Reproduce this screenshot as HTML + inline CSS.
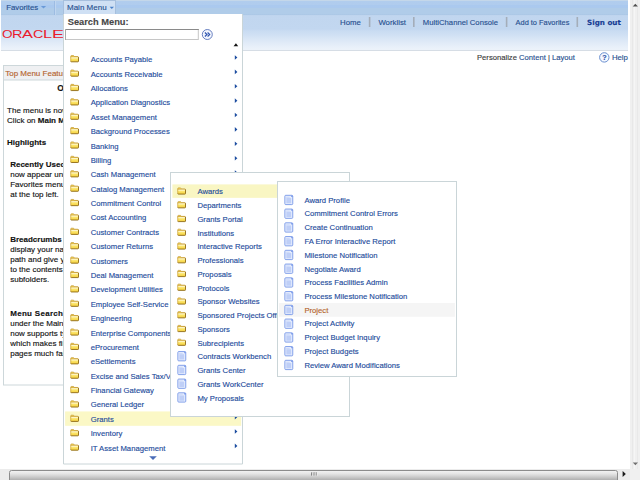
<!DOCTYPE html>
<html><head><meta charset="utf-8"><title>Main Menu</title>
<style>
html,body{margin:0;padding:0;}
body{width:640px;height:480px;overflow:hidden;position:relative;background:#fff;font-family:"Liberation Sans",Arial,sans-serif;font-size:8px;color:#111;-webkit-text-stroke:0.13px;}
.abs{position:absolute;}
.t{position:absolute;white-space:nowrap;}
.menu{position:absolute;background:#fff;}
.menu svg{position:absolute;left:0;top:0;}
.menu .t{color:#1d4b9b;}
</style></head><body>
<svg width="0" height="0" style="position:absolute"><defs><linearGradient id="fg" x1="0" y1="0" x2="0" y2="1"><stop offset="0" stop-color="#fff3a0"/><stop offset="0.5" stop-color="#fbe264"/><stop offset="1" stop-color="#f4cf3a"/></linearGradient></defs></svg>

<div class="abs" style="left:1px;top:0;width:627px;height:15px;background:linear-gradient(#c4d7ea 0,#c4d7ea 1px,#b1cdee 1.3px,#b0ccee 5px,#aac9ef 5.5px,#abc9ee 8px,#b0cce9 8.5px,#b0cce9 14.3px,#abc7e5 14.6px,#abc7e5 15px);"></div>
<div class="abs" style="left:1px;top:15px;width:627px;height:35px;background:linear-gradient(#b4cdea 0,#c1d6ef 0.6px,#c2d7f0 14px,#c9dcf2 16px,#d0e0f4 20px,#d9e6f6 24px,#e1ebf8 28px,#eaf1fa 33px,#ecf2fa 35px);"></div>
<div class="abs" style="left:1px;top:50px;width:627px;height:1px;background:#d6dde5;"></div>
<svg class="abs" style="left:0;top:0" width="640" height="480">
<path d="M40.9 5.9 h5.2 l-2.6 2.6 Z" fill="#6a9ad8"/>
<rect x="54" y="1" width="0.8" height="14" fill="#94b4de"/><rect x="54.9" y="1" width="1" height="14" fill="#c3d8f1"/>
<rect x="63.5" y="0.5" width="52" height="15" fill="#cfe0f4" stroke="#a6bfdd" stroke-width="1"/>
<path d="M109.6 6.8 h4.4 l-2.2 2.2 Z" fill="#4a80c8"/>
<rect x="368.8" y="17" width="1.6" height="10" fill="#a4adb9"/>
<rect x="413.0" y="17" width="1.6" height="10" fill="#a4adb9"/>
<rect x="505.8" y="17" width="1.6" height="10" fill="#a4adb9"/>
<rect x="576.5" y="17" width="1.6" height="10" fill="#a4adb9"/>
<circle cx="604.3" cy="57.4" r="4.7" fill="#f4f8ff" stroke="#6a8fd0" stroke-width="1"/>
<rect x="3.5" y="65.5" width="236" height="319.5" fill="#fff" stroke="#cdd7da" stroke-width="1"/>
<rect x="3.5" y="65.5" width="236" height="14.5" fill="#eff0f2" stroke="#cdd7da" stroke-width="1"/>
<rect x="630" y="0" width="10" height="469" fill="#f0f0f0"/>
<rect x="632" y="0" width="1" height="469" fill="#e8e8e8"/><rect x="634" y="0" width="1" height="469" fill="#f6f6f6"/><rect x="637" y="0" width="1" height="469" fill="#e9e9e9"/>
<rect x="0" y="469" width="640" height="11" fill="#ececec"/>
<rect x="630" y="469" width="10" height="11" fill="#f0f0f0"/>
<defs><linearGradient id="sb" x1="0" y1="0" x2="0" y2="1"><stop offset="0" stop-color="#f4f4f4"/><stop offset="0.25" stop-color="#e6e6e6"/><stop offset="0.45" stop-color="#d4d4d4"/><stop offset="0.75" stop-color="#b4b4b4"/></linearGradient></defs>
<rect x="9.5" y="470.5" width="608" height="12" rx="2" fill="url(#sb)" stroke="#8c8c8c" stroke-width="1"/>
<path d="M311.8 472.3 v3.3 M314.1 472.3 v3.3 M316.2 472.3 v3.3" stroke="#555" stroke-width="0.9"/><path d="M312.7 472.5 v3.6 M315 472.5 v3.6 M317.1 472.5 v3.6" stroke="#f4f4f4" stroke-width="0.7"/>
<path d="M632.7 6.6 l2.6 -2.8 l2.6 2.8 Z" fill="#505050"/>
<path d="M632.8 462.4 h5.2 l-2.6 2.8 Z" fill="#707070"/>
<path d="M622.6 471 l3.2 3 l-3.2 3 Z" fill="#1a1a1a"/>
</svg>
<div class="t" style="left:6.2px;top:3px;font-size:7.8px;line-height:9px;color:#27508f;">Favorites</div>
<div class="t" style="left:67px;top:3px;font-size:8px;line-height:9px;color:#27508f;">Main Menu</div>
<div class="t" title="ORACLE" style="left:0;top:27.5px;width:70px;height:12px;font-size:10.8px;line-height:12px;color:#ea1b2d;-webkit-text-stroke:0;"><span style="position:absolute;left:1.77px;top:0;transform:scaleX(1.257);transform-origin:0 0;">O</span><span style="position:absolute;left:11.69px;top:0;transform:scaleX(1.344);transform-origin:0 0;">R</span><span style="position:absolute;left:22.05px;top:0;transform:scaleX(1.515);transform-origin:0 0;">A</span><span style="position:absolute;left:33.01px;top:0;transform:scaleX(1.324);transform-origin:0 0;">C</span><span style="position:absolute;left:43.34px;top:0;transform:scaleX(1.511);transform-origin:0 0;">L</span><span style="position:absolute;left:51.91px;top:0;transform:scaleX(1.655);transform-origin:0 0;">E</span></div>
<div class="t" style="left:340.1px;top:18px;font-size:7.8px;line-height:9px;color:#27508f;">Home</div>
<div class="t" style="left:378.4px;top:18px;font-size:7.8px;line-height:9px;color:#27508f;">Worklist</div>
<div class="t" style="left:422.8px;top:18px;font-size:7.7px;line-height:9px;color:#27508f;">MultiChannel Console</div>
<div class="t" style="left:515.6px;top:18px;font-size:7.4px;line-height:9px;color:#27508f;">Add to Favorites</div>
<div class="t" style="left:587px;top:18px;font-size:7.2px;line-height:9px;color:#173d94;font-weight:bold;font-family:'DejaVu Sans','Liberation Sans',sans-serif;">Sign out</div>
<div class="t" style="left:477px;top:53px;font-size:7.65px;line-height:9px;color:#3a3a3a;">Personalize <span style="color:#27508f">Content</span> | <span style="color:#27508f">Layout</span></div>
<div class="t" style="left:602.2px;top:53px;font-size:7.2px;line-height:9px;color:#2f55a8;font-weight:bold;">?</div>
<div class="t" style="left:611.9px;top:53px;font-size:7.8px;line-height:9px;color:#27508f;">Help</div>
<div class="t" style="left:5.2px;top:69px;font-size:8px;line-height:9px;color:#b4632c;">Top Menu Features Description</div>
<div class="t" style="left:57.3px;top:83px;font-size:8.4px;line-height:10px;font-weight:bold;">Our menu has changed!</div>
<div class="t" style="left:7.1px;top:106px;font-size:8px;line-height:9px;">The menu is now located across the top of the page.</div>
<div class="t" style="left:7.1px;top:116px;font-size:8px;line-height:9px;">Click on <b>Main Menu</b> to get started.</div>
<div class="t" style="left:7.1px;top:138px;font-size:8px;line-height:9px;"><b>Highlights</b></div>
<div class="t" style="left:10.2px;top:160px;font-size:8px;line-height:9px;"><b>Recently Used</b> pages</div>
<div class="t" style="left:10.2px;top:170px;font-size:8px;line-height:9px;">now appear under the</div>
<div class="t" style="left:10.2px;top:180px;font-size:8px;line-height:9px;">Favorites menu, located</div>
<div class="t" style="left:10.2px;top:190px;font-size:8px;line-height:9px;">at the top left.</div>
<div class="t" style="left:10.2px;top:235px;font-size:8px;line-height:9px;"><b>Breadcrumbs</b> visually</div>
<div class="t" style="left:10.2px;top:245px;font-size:8px;line-height:9px;">display your navigation</div>
<div class="t" style="left:10.2px;top:255px;font-size:8px;line-height:9px;">path and give you access</div>
<div class="t" style="left:10.2px;top:265px;font-size:8px;line-height:9px;">to the contents of</div>
<div class="t" style="left:10.2px;top:275px;font-size:8px;line-height:9px;">subfolders.</div>
<div class="t" style="left:10.2px;top:309px;font-size:8px;line-height:9px;"><b style="letter-spacing:0.3px">Menu Search</b>, located</div>
<div class="t" style="left:10.2px;top:319px;font-size:8px;line-height:9px;">under the Main Menu,</div>
<div class="t" style="left:10.2px;top:329px;font-size:8px;line-height:9px;">now supports type ahead</div>
<div class="t" style="left:10.2px;top:339px;font-size:8px;line-height:9px;">which makes finding</div>
<div class="t" style="left:10.2px;top:349px;font-size:8px;line-height:9px;">pages much faster.</div>
<div class="menu" style="left:63px;top:14px;width:180px;height:451px;">
<svg width="180" height="451">
<path d="M0.5 0 V450 H179.5 V0" fill="none" stroke="#cad5d8" stroke-width="1"/>
<rect x="2.5" y="15.5" width="132.8" height="10" fill="#fff" stroke="#c6c6c6" stroke-width="1"/><path d="M2 15.5 H135.8" stroke="#8a8a8a" stroke-width="1"/><path d="M2.5 15 V26" stroke="#a8a8a8" stroke-width="1"/>
<circle cx="144.3" cy="20.5" r="5" fill="#f3f6fd" stroke="#5873ba" stroke-width="0.9"/><path d="M141.9 18.5 L144 20.5 L141.9 22.5 M144.6 18.5 L146.7 20.5 L144.6 22.5" fill="none" stroke="#2f55b0" stroke-width="1.15"/>
<path d="M170.6 32.2 l2.3 -3 l2.3 3 Z" fill="#111"/>
<g transform="translate(7.30 41.20)"><path d="M0.5 2 V1 Q0.5 0.4 1.1 0.4 H3.3 L4.2 1.4 H7.6 V2 Z" fill="#f6d95a" stroke="#c29630" stroke-width="0.7"/><path d="M0.45 1.9 H8.2 V6.0 Q8.2 6.6 7.6 6.6 H1.05 Q0.45 6.6 0.45 6.0 Z" fill="url(#fg)"/><path d="M0.45 6.1 V1.9 H8.2" fill="none" stroke="#cfa53a" stroke-width="0.8"/><path d="M8.2 1.9 V6.0 Q8.2 6.6 7.6 6.6 H1.05 Q0.45 6.6 0.45 6.0" fill="none" stroke="#94701c" stroke-width="0.95"/><path d="M1 2.6 H7.6" stroke="#fffce2" stroke-width="0.8"/></g>
<path d="M171.80 41.20 l2.6 2.3 l-2.6 2.3 Z" fill="#1c4da0"/>
<g transform="translate(7.30 55.59)"><path d="M0.5 2 V1 Q0.5 0.4 1.1 0.4 H3.3 L4.2 1.4 H7.6 V2 Z" fill="#f6d95a" stroke="#c29630" stroke-width="0.7"/><path d="M0.45 1.9 H8.2 V6.0 Q8.2 6.6 7.6 6.6 H1.05 Q0.45 6.6 0.45 6.0 Z" fill="url(#fg)"/><path d="M0.45 6.1 V1.9 H8.2" fill="none" stroke="#cfa53a" stroke-width="0.8"/><path d="M8.2 1.9 V6.0 Q8.2 6.6 7.6 6.6 H1.05 Q0.45 6.6 0.45 6.0" fill="none" stroke="#94701c" stroke-width="0.95"/><path d="M1 2.6 H7.6" stroke="#fffce2" stroke-width="0.8"/></g>
<path d="M171.80 55.59 l2.6 2.3 l-2.6 2.3 Z" fill="#1c4da0"/>
<g transform="translate(7.30 69.97)"><path d="M0.5 2 V1 Q0.5 0.4 1.1 0.4 H3.3 L4.2 1.4 H7.6 V2 Z" fill="#f6d95a" stroke="#c29630" stroke-width="0.7"/><path d="M0.45 1.9 H8.2 V6.0 Q8.2 6.6 7.6 6.6 H1.05 Q0.45 6.6 0.45 6.0 Z" fill="url(#fg)"/><path d="M0.45 6.1 V1.9 H8.2" fill="none" stroke="#cfa53a" stroke-width="0.8"/><path d="M8.2 1.9 V6.0 Q8.2 6.6 7.6 6.6 H1.05 Q0.45 6.6 0.45 6.0" fill="none" stroke="#94701c" stroke-width="0.95"/><path d="M1 2.6 H7.6" stroke="#fffce2" stroke-width="0.8"/></g>
<path d="M171.80 69.97 l2.6 2.3 l-2.6 2.3 Z" fill="#1c4da0"/>
<g transform="translate(7.30 84.36)"><path d="M0.5 2 V1 Q0.5 0.4 1.1 0.4 H3.3 L4.2 1.4 H7.6 V2 Z" fill="#f6d95a" stroke="#c29630" stroke-width="0.7"/><path d="M0.45 1.9 H8.2 V6.0 Q8.2 6.6 7.6 6.6 H1.05 Q0.45 6.6 0.45 6.0 Z" fill="url(#fg)"/><path d="M0.45 6.1 V1.9 H8.2" fill="none" stroke="#cfa53a" stroke-width="0.8"/><path d="M8.2 1.9 V6.0 Q8.2 6.6 7.6 6.6 H1.05 Q0.45 6.6 0.45 6.0" fill="none" stroke="#94701c" stroke-width="0.95"/><path d="M1 2.6 H7.6" stroke="#fffce2" stroke-width="0.8"/></g>
<path d="M171.80 84.36 l2.6 2.3 l-2.6 2.3 Z" fill="#1c4da0"/>
<g transform="translate(7.30 98.74)"><path d="M0.5 2 V1 Q0.5 0.4 1.1 0.4 H3.3 L4.2 1.4 H7.6 V2 Z" fill="#f6d95a" stroke="#c29630" stroke-width="0.7"/><path d="M0.45 1.9 H8.2 V6.0 Q8.2 6.6 7.6 6.6 H1.05 Q0.45 6.6 0.45 6.0 Z" fill="url(#fg)"/><path d="M0.45 6.1 V1.9 H8.2" fill="none" stroke="#cfa53a" stroke-width="0.8"/><path d="M8.2 1.9 V6.0 Q8.2 6.6 7.6 6.6 H1.05 Q0.45 6.6 0.45 6.0" fill="none" stroke="#94701c" stroke-width="0.95"/><path d="M1 2.6 H7.6" stroke="#fffce2" stroke-width="0.8"/></g>
<path d="M171.80 98.74 l2.6 2.3 l-2.6 2.3 Z" fill="#1c4da0"/>
<g transform="translate(7.30 113.12)"><path d="M0.5 2 V1 Q0.5 0.4 1.1 0.4 H3.3 L4.2 1.4 H7.6 V2 Z" fill="#f6d95a" stroke="#c29630" stroke-width="0.7"/><path d="M0.45 1.9 H8.2 V6.0 Q8.2 6.6 7.6 6.6 H1.05 Q0.45 6.6 0.45 6.0 Z" fill="url(#fg)"/><path d="M0.45 6.1 V1.9 H8.2" fill="none" stroke="#cfa53a" stroke-width="0.8"/><path d="M8.2 1.9 V6.0 Q8.2 6.6 7.6 6.6 H1.05 Q0.45 6.6 0.45 6.0" fill="none" stroke="#94701c" stroke-width="0.95"/><path d="M1 2.6 H7.6" stroke="#fffce2" stroke-width="0.8"/></g>
<path d="M171.80 113.12 l2.6 2.3 l-2.6 2.3 Z" fill="#1c4da0"/>
<g transform="translate(7.30 127.51)"><path d="M0.5 2 V1 Q0.5 0.4 1.1 0.4 H3.3 L4.2 1.4 H7.6 V2 Z" fill="#f6d95a" stroke="#c29630" stroke-width="0.7"/><path d="M0.45 1.9 H8.2 V6.0 Q8.2 6.6 7.6 6.6 H1.05 Q0.45 6.6 0.45 6.0 Z" fill="url(#fg)"/><path d="M0.45 6.1 V1.9 H8.2" fill="none" stroke="#cfa53a" stroke-width="0.8"/><path d="M8.2 1.9 V6.0 Q8.2 6.6 7.6 6.6 H1.05 Q0.45 6.6 0.45 6.0" fill="none" stroke="#94701c" stroke-width="0.95"/><path d="M1 2.6 H7.6" stroke="#fffce2" stroke-width="0.8"/></g>
<path d="M171.80 127.51 l2.6 2.3 l-2.6 2.3 Z" fill="#1c4da0"/>
<g transform="translate(7.30 141.89)"><path d="M0.5 2 V1 Q0.5 0.4 1.1 0.4 H3.3 L4.2 1.4 H7.6 V2 Z" fill="#f6d95a" stroke="#c29630" stroke-width="0.7"/><path d="M0.45 1.9 H8.2 V6.0 Q8.2 6.6 7.6 6.6 H1.05 Q0.45 6.6 0.45 6.0 Z" fill="url(#fg)"/><path d="M0.45 6.1 V1.9 H8.2" fill="none" stroke="#cfa53a" stroke-width="0.8"/><path d="M8.2 1.9 V6.0 Q8.2 6.6 7.6 6.6 H1.05 Q0.45 6.6 0.45 6.0" fill="none" stroke="#94701c" stroke-width="0.95"/><path d="M1 2.6 H7.6" stroke="#fffce2" stroke-width="0.8"/></g>
<path d="M171.80 141.89 l2.6 2.3 l-2.6 2.3 Z" fill="#1c4da0"/>
<g transform="translate(7.30 156.28)"><path d="M0.5 2 V1 Q0.5 0.4 1.1 0.4 H3.3 L4.2 1.4 H7.6 V2 Z" fill="#f6d95a" stroke="#c29630" stroke-width="0.7"/><path d="M0.45 1.9 H8.2 V6.0 Q8.2 6.6 7.6 6.6 H1.05 Q0.45 6.6 0.45 6.0 Z" fill="url(#fg)"/><path d="M0.45 6.1 V1.9 H8.2" fill="none" stroke="#cfa53a" stroke-width="0.8"/><path d="M8.2 1.9 V6.0 Q8.2 6.6 7.6 6.6 H1.05 Q0.45 6.6 0.45 6.0" fill="none" stroke="#94701c" stroke-width="0.95"/><path d="M1 2.6 H7.6" stroke="#fffce2" stroke-width="0.8"/></g>
<path d="M171.80 156.28 l2.6 2.3 l-2.6 2.3 Z" fill="#1c4da0"/>
<g transform="translate(7.30 170.67)"><path d="M0.5 2 V1 Q0.5 0.4 1.1 0.4 H3.3 L4.2 1.4 H7.6 V2 Z" fill="#f6d95a" stroke="#c29630" stroke-width="0.7"/><path d="M0.45 1.9 H8.2 V6.0 Q8.2 6.6 7.6 6.6 H1.05 Q0.45 6.6 0.45 6.0 Z" fill="url(#fg)"/><path d="M0.45 6.1 V1.9 H8.2" fill="none" stroke="#cfa53a" stroke-width="0.8"/><path d="M8.2 1.9 V6.0 Q8.2 6.6 7.6 6.6 H1.05 Q0.45 6.6 0.45 6.0" fill="none" stroke="#94701c" stroke-width="0.95"/><path d="M1 2.6 H7.6" stroke="#fffce2" stroke-width="0.8"/></g>
<path d="M171.80 170.67 l2.6 2.3 l-2.6 2.3 Z" fill="#1c4da0"/>
<g transform="translate(7.30 185.05)"><path d="M0.5 2 V1 Q0.5 0.4 1.1 0.4 H3.3 L4.2 1.4 H7.6 V2 Z" fill="#f6d95a" stroke="#c29630" stroke-width="0.7"/><path d="M0.45 1.9 H8.2 V6.0 Q8.2 6.6 7.6 6.6 H1.05 Q0.45 6.6 0.45 6.0 Z" fill="url(#fg)"/><path d="M0.45 6.1 V1.9 H8.2" fill="none" stroke="#cfa53a" stroke-width="0.8"/><path d="M8.2 1.9 V6.0 Q8.2 6.6 7.6 6.6 H1.05 Q0.45 6.6 0.45 6.0" fill="none" stroke="#94701c" stroke-width="0.95"/><path d="M1 2.6 H7.6" stroke="#fffce2" stroke-width="0.8"/></g>
<path d="M171.80 185.05 l2.6 2.3 l-2.6 2.3 Z" fill="#1c4da0"/>
<g transform="translate(7.30 199.44)"><path d="M0.5 2 V1 Q0.5 0.4 1.1 0.4 H3.3 L4.2 1.4 H7.6 V2 Z" fill="#f6d95a" stroke="#c29630" stroke-width="0.7"/><path d="M0.45 1.9 H8.2 V6.0 Q8.2 6.6 7.6 6.6 H1.05 Q0.45 6.6 0.45 6.0 Z" fill="url(#fg)"/><path d="M0.45 6.1 V1.9 H8.2" fill="none" stroke="#cfa53a" stroke-width="0.8"/><path d="M8.2 1.9 V6.0 Q8.2 6.6 7.6 6.6 H1.05 Q0.45 6.6 0.45 6.0" fill="none" stroke="#94701c" stroke-width="0.95"/><path d="M1 2.6 H7.6" stroke="#fffce2" stroke-width="0.8"/></g>
<path d="M171.80 199.44 l2.6 2.3 l-2.6 2.3 Z" fill="#1c4da0"/>
<g transform="translate(7.30 213.82)"><path d="M0.5 2 V1 Q0.5 0.4 1.1 0.4 H3.3 L4.2 1.4 H7.6 V2 Z" fill="#f6d95a" stroke="#c29630" stroke-width="0.7"/><path d="M0.45 1.9 H8.2 V6.0 Q8.2 6.6 7.6 6.6 H1.05 Q0.45 6.6 0.45 6.0 Z" fill="url(#fg)"/><path d="M0.45 6.1 V1.9 H8.2" fill="none" stroke="#cfa53a" stroke-width="0.8"/><path d="M8.2 1.9 V6.0 Q8.2 6.6 7.6 6.6 H1.05 Q0.45 6.6 0.45 6.0" fill="none" stroke="#94701c" stroke-width="0.95"/><path d="M1 2.6 H7.6" stroke="#fffce2" stroke-width="0.8"/></g>
<path d="M171.80 213.82 l2.6 2.3 l-2.6 2.3 Z" fill="#1c4da0"/>
<g transform="translate(7.30 228.20)"><path d="M0.5 2 V1 Q0.5 0.4 1.1 0.4 H3.3 L4.2 1.4 H7.6 V2 Z" fill="#f6d95a" stroke="#c29630" stroke-width="0.7"/><path d="M0.45 1.9 H8.2 V6.0 Q8.2 6.6 7.6 6.6 H1.05 Q0.45 6.6 0.45 6.0 Z" fill="url(#fg)"/><path d="M0.45 6.1 V1.9 H8.2" fill="none" stroke="#cfa53a" stroke-width="0.8"/><path d="M8.2 1.9 V6.0 Q8.2 6.6 7.6 6.6 H1.05 Q0.45 6.6 0.45 6.0" fill="none" stroke="#94701c" stroke-width="0.95"/><path d="M1 2.6 H7.6" stroke="#fffce2" stroke-width="0.8"/></g>
<path d="M171.80 228.20 l2.6 2.3 l-2.6 2.3 Z" fill="#1c4da0"/>
<g transform="translate(7.30 242.59)"><path d="M0.5 2 V1 Q0.5 0.4 1.1 0.4 H3.3 L4.2 1.4 H7.6 V2 Z" fill="#f6d95a" stroke="#c29630" stroke-width="0.7"/><path d="M0.45 1.9 H8.2 V6.0 Q8.2 6.6 7.6 6.6 H1.05 Q0.45 6.6 0.45 6.0 Z" fill="url(#fg)"/><path d="M0.45 6.1 V1.9 H8.2" fill="none" stroke="#cfa53a" stroke-width="0.8"/><path d="M8.2 1.9 V6.0 Q8.2 6.6 7.6 6.6 H1.05 Q0.45 6.6 0.45 6.0" fill="none" stroke="#94701c" stroke-width="0.95"/><path d="M1 2.6 H7.6" stroke="#fffce2" stroke-width="0.8"/></g>
<path d="M171.80 242.59 l2.6 2.3 l-2.6 2.3 Z" fill="#1c4da0"/>
<g transform="translate(7.30 256.98)"><path d="M0.5 2 V1 Q0.5 0.4 1.1 0.4 H3.3 L4.2 1.4 H7.6 V2 Z" fill="#f6d95a" stroke="#c29630" stroke-width="0.7"/><path d="M0.45 1.9 H8.2 V6.0 Q8.2 6.6 7.6 6.6 H1.05 Q0.45 6.6 0.45 6.0 Z" fill="url(#fg)"/><path d="M0.45 6.1 V1.9 H8.2" fill="none" stroke="#cfa53a" stroke-width="0.8"/><path d="M8.2 1.9 V6.0 Q8.2 6.6 7.6 6.6 H1.05 Q0.45 6.6 0.45 6.0" fill="none" stroke="#94701c" stroke-width="0.95"/><path d="M1 2.6 H7.6" stroke="#fffce2" stroke-width="0.8"/></g>
<path d="M171.80 256.98 l2.6 2.3 l-2.6 2.3 Z" fill="#1c4da0"/>
<g transform="translate(7.30 271.36)"><path d="M0.5 2 V1 Q0.5 0.4 1.1 0.4 H3.3 L4.2 1.4 H7.6 V2 Z" fill="#f6d95a" stroke="#c29630" stroke-width="0.7"/><path d="M0.45 1.9 H8.2 V6.0 Q8.2 6.6 7.6 6.6 H1.05 Q0.45 6.6 0.45 6.0 Z" fill="url(#fg)"/><path d="M0.45 6.1 V1.9 H8.2" fill="none" stroke="#cfa53a" stroke-width="0.8"/><path d="M8.2 1.9 V6.0 Q8.2 6.6 7.6 6.6 H1.05 Q0.45 6.6 0.45 6.0" fill="none" stroke="#94701c" stroke-width="0.95"/><path d="M1 2.6 H7.6" stroke="#fffce2" stroke-width="0.8"/></g>
<path d="M171.80 271.36 l2.6 2.3 l-2.6 2.3 Z" fill="#1c4da0"/>
<g transform="translate(7.30 285.75)"><path d="M0.5 2 V1 Q0.5 0.4 1.1 0.4 H3.3 L4.2 1.4 H7.6 V2 Z" fill="#f6d95a" stroke="#c29630" stroke-width="0.7"/><path d="M0.45 1.9 H8.2 V6.0 Q8.2 6.6 7.6 6.6 H1.05 Q0.45 6.6 0.45 6.0 Z" fill="url(#fg)"/><path d="M0.45 6.1 V1.9 H8.2" fill="none" stroke="#cfa53a" stroke-width="0.8"/><path d="M8.2 1.9 V6.0 Q8.2 6.6 7.6 6.6 H1.05 Q0.45 6.6 0.45 6.0" fill="none" stroke="#94701c" stroke-width="0.95"/><path d="M1 2.6 H7.6" stroke="#fffce2" stroke-width="0.8"/></g>
<path d="M171.80 285.75 l2.6 2.3 l-2.6 2.3 Z" fill="#1c4da0"/>
<g transform="translate(7.30 300.13)"><path d="M0.5 2 V1 Q0.5 0.4 1.1 0.4 H3.3 L4.2 1.4 H7.6 V2 Z" fill="#f6d95a" stroke="#c29630" stroke-width="0.7"/><path d="M0.45 1.9 H8.2 V6.0 Q8.2 6.6 7.6 6.6 H1.05 Q0.45 6.6 0.45 6.0 Z" fill="url(#fg)"/><path d="M0.45 6.1 V1.9 H8.2" fill="none" stroke="#cfa53a" stroke-width="0.8"/><path d="M8.2 1.9 V6.0 Q8.2 6.6 7.6 6.6 H1.05 Q0.45 6.6 0.45 6.0" fill="none" stroke="#94701c" stroke-width="0.95"/><path d="M1 2.6 H7.6" stroke="#fffce2" stroke-width="0.8"/></g>
<path d="M171.80 300.13 l2.6 2.3 l-2.6 2.3 Z" fill="#1c4da0"/>
<g transform="translate(7.30 314.51)"><path d="M0.5 2 V1 Q0.5 0.4 1.1 0.4 H3.3 L4.2 1.4 H7.6 V2 Z" fill="#f6d95a" stroke="#c29630" stroke-width="0.7"/><path d="M0.45 1.9 H8.2 V6.0 Q8.2 6.6 7.6 6.6 H1.05 Q0.45 6.6 0.45 6.0 Z" fill="url(#fg)"/><path d="M0.45 6.1 V1.9 H8.2" fill="none" stroke="#cfa53a" stroke-width="0.8"/><path d="M8.2 1.9 V6.0 Q8.2 6.6 7.6 6.6 H1.05 Q0.45 6.6 0.45 6.0" fill="none" stroke="#94701c" stroke-width="0.95"/><path d="M1 2.6 H7.6" stroke="#fffce2" stroke-width="0.8"/></g>
<path d="M171.80 314.51 l2.6 2.3 l-2.6 2.3 Z" fill="#1c4da0"/>
<g transform="translate(7.30 328.90)"><path d="M0.5 2 V1 Q0.5 0.4 1.1 0.4 H3.3 L4.2 1.4 H7.6 V2 Z" fill="#f6d95a" stroke="#c29630" stroke-width="0.7"/><path d="M0.45 1.9 H8.2 V6.0 Q8.2 6.6 7.6 6.6 H1.05 Q0.45 6.6 0.45 6.0 Z" fill="url(#fg)"/><path d="M0.45 6.1 V1.9 H8.2" fill="none" stroke="#cfa53a" stroke-width="0.8"/><path d="M8.2 1.9 V6.0 Q8.2 6.6 7.6 6.6 H1.05 Q0.45 6.6 0.45 6.0" fill="none" stroke="#94701c" stroke-width="0.95"/><path d="M1 2.6 H7.6" stroke="#fffce2" stroke-width="0.8"/></g>
<path d="M171.80 328.90 l2.6 2.3 l-2.6 2.3 Z" fill="#1c4da0"/>
<g transform="translate(7.30 343.28)"><path d="M0.5 2 V1 Q0.5 0.4 1.1 0.4 H3.3 L4.2 1.4 H7.6 V2 Z" fill="#f6d95a" stroke="#c29630" stroke-width="0.7"/><path d="M0.45 1.9 H8.2 V6.0 Q8.2 6.6 7.6 6.6 H1.05 Q0.45 6.6 0.45 6.0 Z" fill="url(#fg)"/><path d="M0.45 6.1 V1.9 H8.2" fill="none" stroke="#cfa53a" stroke-width="0.8"/><path d="M8.2 1.9 V6.0 Q8.2 6.6 7.6 6.6 H1.05 Q0.45 6.6 0.45 6.0" fill="none" stroke="#94701c" stroke-width="0.95"/><path d="M1 2.6 H7.6" stroke="#fffce2" stroke-width="0.8"/></g>
<path d="M171.80 343.28 l2.6 2.3 l-2.6 2.3 Z" fill="#1c4da0"/>
<g transform="translate(7.30 357.67)"><path d="M0.5 2 V1 Q0.5 0.4 1.1 0.4 H3.3 L4.2 1.4 H7.6 V2 Z" fill="#f6d95a" stroke="#c29630" stroke-width="0.7"/><path d="M0.45 1.9 H8.2 V6.0 Q8.2 6.6 7.6 6.6 H1.05 Q0.45 6.6 0.45 6.0 Z" fill="url(#fg)"/><path d="M0.45 6.1 V1.9 H8.2" fill="none" stroke="#cfa53a" stroke-width="0.8"/><path d="M8.2 1.9 V6.0 Q8.2 6.6 7.6 6.6 H1.05 Q0.45 6.6 0.45 6.0" fill="none" stroke="#94701c" stroke-width="0.95"/><path d="M1 2.6 H7.6" stroke="#fffce2" stroke-width="0.8"/></g>
<path d="M171.80 357.67 l2.6 2.3 l-2.6 2.3 Z" fill="#1c4da0"/>
<g transform="translate(7.30 372.06)"><path d="M0.5 2 V1 Q0.5 0.4 1.1 0.4 H3.3 L4.2 1.4 H7.6 V2 Z" fill="#f6d95a" stroke="#c29630" stroke-width="0.7"/><path d="M0.45 1.9 H8.2 V6.0 Q8.2 6.6 7.6 6.6 H1.05 Q0.45 6.6 0.45 6.0 Z" fill="url(#fg)"/><path d="M0.45 6.1 V1.9 H8.2" fill="none" stroke="#cfa53a" stroke-width="0.8"/><path d="M8.2 1.9 V6.0 Q8.2 6.6 7.6 6.6 H1.05 Q0.45 6.6 0.45 6.0" fill="none" stroke="#94701c" stroke-width="0.95"/><path d="M1 2.6 H7.6" stroke="#fffce2" stroke-width="0.8"/></g>
<path d="M171.80 372.06 l2.6 2.3 l-2.6 2.3 Z" fill="#1c4da0"/>
<g transform="translate(7.30 386.44)"><path d="M0.5 2 V1 Q0.5 0.4 1.1 0.4 H3.3 L4.2 1.4 H7.6 V2 Z" fill="#f6d95a" stroke="#c29630" stroke-width="0.7"/><path d="M0.45 1.9 H8.2 V6.0 Q8.2 6.6 7.6 6.6 H1.05 Q0.45 6.6 0.45 6.0 Z" fill="url(#fg)"/><path d="M0.45 6.1 V1.9 H8.2" fill="none" stroke="#cfa53a" stroke-width="0.8"/><path d="M8.2 1.9 V6.0 Q8.2 6.6 7.6 6.6 H1.05 Q0.45 6.6 0.45 6.0" fill="none" stroke="#94701c" stroke-width="0.95"/><path d="M1 2.6 H7.6" stroke="#fffce2" stroke-width="0.8"/></g>
<path d="M171.80 386.44 l2.6 2.3 l-2.6 2.3 Z" fill="#1c4da0"/>
<rect x="2.1" y="397.43" width="176.1" height="14.38" fill="#fbf8c6"/>
<g transform="translate(7.30 400.82)"><path d="M0.5 2 V1 Q0.5 0.4 1.1 0.4 H3.3 L4.2 1.4 H7.6 V2 Z" fill="#f6d95a" stroke="#c29630" stroke-width="0.7"/><path d="M0.45 1.9 H8.2 V6.0 Q8.2 6.6 7.6 6.6 H1.05 Q0.45 6.6 0.45 6.0 Z" fill="url(#fg)"/><path d="M0.45 6.1 V1.9 H8.2" fill="none" stroke="#cfa53a" stroke-width="0.8"/><path d="M8.2 1.9 V6.0 Q8.2 6.6 7.6 6.6 H1.05 Q0.45 6.6 0.45 6.0" fill="none" stroke="#94701c" stroke-width="0.95"/><path d="M1 2.6 H7.6" stroke="#fffce2" stroke-width="0.8"/></g>
<path d="M171.80 400.82 l2.6 2.3 l-2.6 2.3 Z" fill="#1c4da0"/>
<g transform="translate(7.30 415.21)"><path d="M0.5 2 V1 Q0.5 0.4 1.1 0.4 H3.3 L4.2 1.4 H7.6 V2 Z" fill="#f6d95a" stroke="#c29630" stroke-width="0.7"/><path d="M0.45 1.9 H8.2 V6.0 Q8.2 6.6 7.6 6.6 H1.05 Q0.45 6.6 0.45 6.0 Z" fill="url(#fg)"/><path d="M0.45 6.1 V1.9 H8.2" fill="none" stroke="#cfa53a" stroke-width="0.8"/><path d="M8.2 1.9 V6.0 Q8.2 6.6 7.6 6.6 H1.05 Q0.45 6.6 0.45 6.0" fill="none" stroke="#94701c" stroke-width="0.95"/><path d="M1 2.6 H7.6" stroke="#fffce2" stroke-width="0.8"/></g>
<path d="M171.80 415.21 l2.6 2.3 l-2.6 2.3 Z" fill="#1c4da0"/>
<g transform="translate(7.30 429.59)"><path d="M0.5 2 V1 Q0.5 0.4 1.1 0.4 H3.3 L4.2 1.4 H7.6 V2 Z" fill="#f6d95a" stroke="#c29630" stroke-width="0.7"/><path d="M0.45 1.9 H8.2 V6.0 Q8.2 6.6 7.6 6.6 H1.05 Q0.45 6.6 0.45 6.0 Z" fill="url(#fg)"/><path d="M0.45 6.1 V1.9 H8.2" fill="none" stroke="#cfa53a" stroke-width="0.8"/><path d="M8.2 1.9 V6.0 Q8.2 6.6 7.6 6.6 H1.05 Q0.45 6.6 0.45 6.0" fill="none" stroke="#94701c" stroke-width="0.95"/><path d="M1 2.6 H7.6" stroke="#fffce2" stroke-width="0.8"/></g>
<path d="M171.80 429.59 l2.6 2.3 l-2.6 2.3 Z" fill="#1c4da0"/>
<path d="M86.2 442.2 h7.6 l-3.8 3.9 Z" fill="#4a6cb8"/>
</svg>
<div class="t" style="left:4.7px;top:3px;font-size:9.3px;line-height:10px;color:#474747;font-weight:bold;">Search Menu:</div>
<div class="t" style="left:27.700000000000003px;top:41px;font-size:7.7px;line-height:9px;">Accounts Payable</div>
<div class="t" style="left:27.700000000000003px;top:56px;font-size:7.7px;line-height:9px;">Accounts Receivable</div>
<div class="t" style="left:27.700000000000003px;top:70px;font-size:7.7px;line-height:9px;">Allocations</div>
<div class="t" style="left:27.700000000000003px;top:84px;font-size:7.7px;line-height:9px;">Application Diagnostics</div>
<div class="t" style="left:27.700000000000003px;top:99px;font-size:7.7px;line-height:9px;">Asset Management</div>
<div class="t" style="left:27.700000000000003px;top:113px;font-size:7.7px;line-height:9px;">Background Processes</div>
<div class="t" style="left:27.700000000000003px;top:128px;font-size:7.7px;line-height:9px;">Banking</div>
<div class="t" style="left:27.700000000000003px;top:142px;font-size:7.7px;line-height:9px;">Billing</div>
<div class="t" style="left:27.700000000000003px;top:156px;font-size:7.7px;line-height:9px;">Cash Management</div>
<div class="t" style="left:27.700000000000003px;top:171px;font-size:7.7px;line-height:9px;">Catalog Management</div>
<div class="t" style="left:27.700000000000003px;top:185px;font-size:7.7px;line-height:9px;">Commitment Control</div>
<div class="t" style="left:27.700000000000003px;top:199px;font-size:7.7px;line-height:9px;">Cost Accounting</div>
<div class="t" style="left:27.700000000000003px;top:214px;font-size:7.7px;line-height:9px;">Customer Contracts</div>
<div class="t" style="left:27.700000000000003px;top:228px;font-size:7.7px;line-height:9px;">Customer Returns</div>
<div class="t" style="left:27.700000000000003px;top:243px;font-size:7.7px;line-height:9px;">Customers</div>
<div class="t" style="left:27.700000000000003px;top:257px;font-size:7.7px;line-height:9px;">Deal Management</div>
<div class="t" style="left:27.700000000000003px;top:271px;font-size:7.7px;line-height:9px;">Development Utilities</div>
<div class="t" style="left:27.700000000000003px;top:286px;font-size:7.7px;line-height:9px;">Employee Self-Service</div>
<div class="t" style="left:27.700000000000003px;top:300px;font-size:7.7px;line-height:9px;">Engineering</div>
<div class="t" style="left:27.700000000000003px;top:315px;font-size:7.7px;line-height:9px;">Enterprise Components</div>
<div class="t" style="left:27.700000000000003px;top:329px;font-size:7.7px;line-height:9px;">eProcurement</div>
<div class="t" style="left:27.700000000000003px;top:343px;font-size:7.7px;line-height:9px;">eSettlements</div>
<div class="t" style="left:27.700000000000003px;top:358px;font-size:7.7px;line-height:9px;">Excise and Sales Tax/VAT IND</div>
<div class="t" style="left:27.700000000000003px;top:372px;font-size:7.7px;line-height:9px;">Financial Gateway</div>
<div class="t" style="left:27.700000000000003px;top:386px;font-size:7.7px;line-height:9px;">General Ledger</div>
<div class="t" style="left:27.700000000000003px;top:401px;font-size:7.7px;line-height:9px;">Grants</div>
<div class="t" style="left:27.700000000000003px;top:415px;font-size:7.7px;line-height:9px;">Inventory</div>
<div class="t" style="left:27.700000000000003px;top:430px;font-size:7.7px;line-height:9px;">IT Asset Management</div>
</div>
<div class="menu" style="left:170px;top:172px;width:180px;height:245px;">
<svg width="180" height="245">
<rect x="0.5" y="0.5" width="179" height="244" fill="none" stroke="#cad5d8" stroke-width="1"/>
<rect x="2.4" y="12.40" width="176.2" height="13.45" fill="#f9f6c3"/>
<g transform="translate(7.30 15.50)"><path d="M0.5 2 V1 Q0.5 0.4 1.1 0.4 H3.3 L4.2 1.4 H7.6 V2 Z" fill="#f6d95a" stroke="#c29630" stroke-width="0.7"/><path d="M0.45 1.9 H8.2 V6.0 Q8.2 6.6 7.6 6.6 H1.05 Q0.45 6.6 0.45 6.0 Z" fill="url(#fg)"/><path d="M0.45 6.1 V1.9 H8.2" fill="none" stroke="#cfa53a" stroke-width="0.8"/><path d="M8.2 1.9 V6.0 Q8.2 6.6 7.6 6.6 H1.05 Q0.45 6.6 0.45 6.0" fill="none" stroke="#94701c" stroke-width="0.95"/><path d="M1 2.6 H7.6" stroke="#fffce2" stroke-width="0.8"/></g>
<g transform="translate(7.30 29.25)"><path d="M0.5 2 V1 Q0.5 0.4 1.1 0.4 H3.3 L4.2 1.4 H7.6 V2 Z" fill="#f6d95a" stroke="#c29630" stroke-width="0.7"/><path d="M0.45 1.9 H8.2 V6.0 Q8.2 6.6 7.6 6.6 H1.05 Q0.45 6.6 0.45 6.0 Z" fill="url(#fg)"/><path d="M0.45 6.1 V1.9 H8.2" fill="none" stroke="#cfa53a" stroke-width="0.8"/><path d="M8.2 1.9 V6.0 Q8.2 6.6 7.6 6.6 H1.05 Q0.45 6.6 0.45 6.0" fill="none" stroke="#94701c" stroke-width="0.95"/><path d="M1 2.6 H7.6" stroke="#fffce2" stroke-width="0.8"/></g>
<g transform="translate(7.30 43.00)"><path d="M0.5 2 V1 Q0.5 0.4 1.1 0.4 H3.3 L4.2 1.4 H7.6 V2 Z" fill="#f6d95a" stroke="#c29630" stroke-width="0.7"/><path d="M0.45 1.9 H8.2 V6.0 Q8.2 6.6 7.6 6.6 H1.05 Q0.45 6.6 0.45 6.0 Z" fill="url(#fg)"/><path d="M0.45 6.1 V1.9 H8.2" fill="none" stroke="#cfa53a" stroke-width="0.8"/><path d="M8.2 1.9 V6.0 Q8.2 6.6 7.6 6.6 H1.05 Q0.45 6.6 0.45 6.0" fill="none" stroke="#94701c" stroke-width="0.95"/><path d="M1 2.6 H7.6" stroke="#fffce2" stroke-width="0.8"/></g>
<g transform="translate(7.30 56.75)"><path d="M0.5 2 V1 Q0.5 0.4 1.1 0.4 H3.3 L4.2 1.4 H7.6 V2 Z" fill="#f6d95a" stroke="#c29630" stroke-width="0.7"/><path d="M0.45 1.9 H8.2 V6.0 Q8.2 6.6 7.6 6.6 H1.05 Q0.45 6.6 0.45 6.0 Z" fill="url(#fg)"/><path d="M0.45 6.1 V1.9 H8.2" fill="none" stroke="#cfa53a" stroke-width="0.8"/><path d="M8.2 1.9 V6.0 Q8.2 6.6 7.6 6.6 H1.05 Q0.45 6.6 0.45 6.0" fill="none" stroke="#94701c" stroke-width="0.95"/><path d="M1 2.6 H7.6" stroke="#fffce2" stroke-width="0.8"/></g>
<g transform="translate(7.30 70.50)"><path d="M0.5 2 V1 Q0.5 0.4 1.1 0.4 H3.3 L4.2 1.4 H7.6 V2 Z" fill="#f6d95a" stroke="#c29630" stroke-width="0.7"/><path d="M0.45 1.9 H8.2 V6.0 Q8.2 6.6 7.6 6.6 H1.05 Q0.45 6.6 0.45 6.0 Z" fill="url(#fg)"/><path d="M0.45 6.1 V1.9 H8.2" fill="none" stroke="#cfa53a" stroke-width="0.8"/><path d="M8.2 1.9 V6.0 Q8.2 6.6 7.6 6.6 H1.05 Q0.45 6.6 0.45 6.0" fill="none" stroke="#94701c" stroke-width="0.95"/><path d="M1 2.6 H7.6" stroke="#fffce2" stroke-width="0.8"/></g>
<g transform="translate(7.30 84.25)"><path d="M0.5 2 V1 Q0.5 0.4 1.1 0.4 H3.3 L4.2 1.4 H7.6 V2 Z" fill="#f6d95a" stroke="#c29630" stroke-width="0.7"/><path d="M0.45 1.9 H8.2 V6.0 Q8.2 6.6 7.6 6.6 H1.05 Q0.45 6.6 0.45 6.0 Z" fill="url(#fg)"/><path d="M0.45 6.1 V1.9 H8.2" fill="none" stroke="#cfa53a" stroke-width="0.8"/><path d="M8.2 1.9 V6.0 Q8.2 6.6 7.6 6.6 H1.05 Q0.45 6.6 0.45 6.0" fill="none" stroke="#94701c" stroke-width="0.95"/><path d="M1 2.6 H7.6" stroke="#fffce2" stroke-width="0.8"/></g>
<g transform="translate(7.30 98.00)"><path d="M0.5 2 V1 Q0.5 0.4 1.1 0.4 H3.3 L4.2 1.4 H7.6 V2 Z" fill="#f6d95a" stroke="#c29630" stroke-width="0.7"/><path d="M0.45 1.9 H8.2 V6.0 Q8.2 6.6 7.6 6.6 H1.05 Q0.45 6.6 0.45 6.0 Z" fill="url(#fg)"/><path d="M0.45 6.1 V1.9 H8.2" fill="none" stroke="#cfa53a" stroke-width="0.8"/><path d="M8.2 1.9 V6.0 Q8.2 6.6 7.6 6.6 H1.05 Q0.45 6.6 0.45 6.0" fill="none" stroke="#94701c" stroke-width="0.95"/><path d="M1 2.6 H7.6" stroke="#fffce2" stroke-width="0.8"/></g>
<g transform="translate(7.30 111.75)"><path d="M0.5 2 V1 Q0.5 0.4 1.1 0.4 H3.3 L4.2 1.4 H7.6 V2 Z" fill="#f6d95a" stroke="#c29630" stroke-width="0.7"/><path d="M0.45 1.9 H8.2 V6.0 Q8.2 6.6 7.6 6.6 H1.05 Q0.45 6.6 0.45 6.0 Z" fill="url(#fg)"/><path d="M0.45 6.1 V1.9 H8.2" fill="none" stroke="#cfa53a" stroke-width="0.8"/><path d="M8.2 1.9 V6.0 Q8.2 6.6 7.6 6.6 H1.05 Q0.45 6.6 0.45 6.0" fill="none" stroke="#94701c" stroke-width="0.95"/><path d="M1 2.6 H7.6" stroke="#fffce2" stroke-width="0.8"/></g>
<g transform="translate(7.30 125.50)"><path d="M0.5 2 V1 Q0.5 0.4 1.1 0.4 H3.3 L4.2 1.4 H7.6 V2 Z" fill="#f6d95a" stroke="#c29630" stroke-width="0.7"/><path d="M0.45 1.9 H8.2 V6.0 Q8.2 6.6 7.6 6.6 H1.05 Q0.45 6.6 0.45 6.0 Z" fill="url(#fg)"/><path d="M0.45 6.1 V1.9 H8.2" fill="none" stroke="#cfa53a" stroke-width="0.8"/><path d="M8.2 1.9 V6.0 Q8.2 6.6 7.6 6.6 H1.05 Q0.45 6.6 0.45 6.0" fill="none" stroke="#94701c" stroke-width="0.95"/><path d="M1 2.6 H7.6" stroke="#fffce2" stroke-width="0.8"/></g>
<g transform="translate(7.30 139.25)"><path d="M0.5 2 V1 Q0.5 0.4 1.1 0.4 H3.3 L4.2 1.4 H7.6 V2 Z" fill="#f6d95a" stroke="#c29630" stroke-width="0.7"/><path d="M0.45 1.9 H8.2 V6.0 Q8.2 6.6 7.6 6.6 H1.05 Q0.45 6.6 0.45 6.0 Z" fill="url(#fg)"/><path d="M0.45 6.1 V1.9 H8.2" fill="none" stroke="#cfa53a" stroke-width="0.8"/><path d="M8.2 1.9 V6.0 Q8.2 6.6 7.6 6.6 H1.05 Q0.45 6.6 0.45 6.0" fill="none" stroke="#94701c" stroke-width="0.95"/><path d="M1 2.6 H7.6" stroke="#fffce2" stroke-width="0.8"/></g>
<g transform="translate(7.30 153.00)"><path d="M0.5 2 V1 Q0.5 0.4 1.1 0.4 H3.3 L4.2 1.4 H7.6 V2 Z" fill="#f6d95a" stroke="#c29630" stroke-width="0.7"/><path d="M0.45 1.9 H8.2 V6.0 Q8.2 6.6 7.6 6.6 H1.05 Q0.45 6.6 0.45 6.0 Z" fill="url(#fg)"/><path d="M0.45 6.1 V1.9 H8.2" fill="none" stroke="#cfa53a" stroke-width="0.8"/><path d="M8.2 1.9 V6.0 Q8.2 6.6 7.6 6.6 H1.05 Q0.45 6.6 0.45 6.0" fill="none" stroke="#94701c" stroke-width="0.95"/><path d="M1 2.6 H7.6" stroke="#fffce2" stroke-width="0.8"/></g>
<g transform="translate(7.30 166.75)"><path d="M0.5 2 V1 Q0.5 0.4 1.1 0.4 H3.3 L4.2 1.4 H7.6 V2 Z" fill="#f6d95a" stroke="#c29630" stroke-width="0.7"/><path d="M0.45 1.9 H8.2 V6.0 Q8.2 6.6 7.6 6.6 H1.05 Q0.45 6.6 0.45 6.0 Z" fill="url(#fg)"/><path d="M0.45 6.1 V1.9 H8.2" fill="none" stroke="#cfa53a" stroke-width="0.8"/><path d="M8.2 1.9 V6.0 Q8.2 6.6 7.6 6.6 H1.05 Q0.45 6.6 0.45 6.0" fill="none" stroke="#94701c" stroke-width="0.95"/><path d="M1 2.6 H7.6" stroke="#fffce2" stroke-width="0.8"/></g>
<g transform="translate(7.40 179.10)"><rect x="0.45" y="0.45" width="7.9" height="9.3" rx="0.9" fill="#e6edfd" stroke="#7797e8" stroke-width="0.9"/><rect x="1.9" y="3.1" width="4.9" height="5.3" fill="#bfcff7"/><rect x="1.7" y="1.9" width="3.6" height="1.1" fill="#ccd9f9"/><path d="M6.9 0.6 H7.6 Q8.2 0.6 8.2 1.2 V2.1 H6.9 Z" fill="#6a8ee6"/></g>
<g transform="translate(7.40 192.85)"><rect x="0.45" y="0.45" width="7.9" height="9.3" rx="0.9" fill="#e6edfd" stroke="#7797e8" stroke-width="0.9"/><rect x="1.9" y="3.1" width="4.9" height="5.3" fill="#bfcff7"/><rect x="1.7" y="1.9" width="3.6" height="1.1" fill="#ccd9f9"/><path d="M6.9 0.6 H7.6 Q8.2 0.6 8.2 1.2 V2.1 H6.9 Z" fill="#6a8ee6"/></g>
<g transform="translate(7.40 206.60)"><rect x="0.45" y="0.45" width="7.9" height="9.3" rx="0.9" fill="#e6edfd" stroke="#7797e8" stroke-width="0.9"/><rect x="1.9" y="3.1" width="4.9" height="5.3" fill="#bfcff7"/><rect x="1.7" y="1.9" width="3.6" height="1.1" fill="#ccd9f9"/><path d="M6.9 0.6 H7.6 Q8.2 0.6 8.2 1.2 V2.1 H6.9 Z" fill="#6a8ee6"/></g>
<g transform="translate(7.40 220.35)"><rect x="0.45" y="0.45" width="7.9" height="9.3" rx="0.9" fill="#e6edfd" stroke="#7797e8" stroke-width="0.9"/><rect x="1.9" y="3.1" width="4.9" height="5.3" fill="#bfcff7"/><rect x="1.7" y="1.9" width="3.6" height="1.1" fill="#ccd9f9"/><path d="M6.9 0.6 H7.6 Q8.2 0.6 8.2 1.2 V2.1 H6.9 Z" fill="#6a8ee6"/></g>
</svg>
<div class="t" style="left:27.400000000000006px;top:15px;font-size:7.7px;line-height:9px;">Awards</div>
<div class="t" style="left:27.400000000000006px;top:29px;font-size:7.7px;line-height:9px;">Departments</div>
<div class="t" style="left:27.400000000000006px;top:43px;font-size:7.7px;line-height:9px;">Grants Portal</div>
<div class="t" style="left:27.400000000000006px;top:57px;font-size:7.7px;line-height:9px;">Institutions</div>
<div class="t" style="left:27.400000000000006px;top:70px;font-size:7.7px;line-height:9px;">Interactive Reports</div>
<div class="t" style="left:27.400000000000006px;top:84px;font-size:7.7px;line-height:9px;">Professionals</div>
<div class="t" style="left:27.400000000000006px;top:98px;font-size:7.7px;line-height:9px;">Proposals</div>
<div class="t" style="left:27.400000000000006px;top:112px;font-size:7.7px;line-height:9px;">Protocols</div>
<div class="t" style="left:27.400000000000006px;top:125px;font-size:7.7px;line-height:9px;">Sponsor Websites</div>
<div class="t" style="left:27.400000000000006px;top:139px;font-size:7.7px;line-height:9px;">Sponsored Projects Office</div>
<div class="t" style="left:27.400000000000006px;top:153px;font-size:7.7px;line-height:9px;">Sponsors</div>
<div class="t" style="left:27.400000000000006px;top:167px;font-size:7.7px;line-height:9px;">Subrecipients</div>
<div class="t" style="left:27.400000000000006px;top:180px;font-size:7.7px;line-height:9px;">Contracts Workbench</div>
<div class="t" style="left:27.400000000000006px;top:194px;font-size:7.7px;line-height:9px;">Grants Center</div>
<div class="t" style="left:27.400000000000006px;top:208px;font-size:7.7px;line-height:9px;">Grants WorkCenter</div>
<div class="t" style="left:27.400000000000006px;top:222px;font-size:7.7px;line-height:9px;">My Proposals</div>
</div>
<div class="menu" style="left:277px;top:181px;width:180px;height:196px;">
<svg width="180" height="196">
<rect x="0.5" y="0.5" width="179" height="195" fill="none" stroke="#cad5d8" stroke-width="1"/>
<g transform="translate(7.40 13.85)"><rect x="0.45" y="0.45" width="7.9" height="9.3" rx="0.9" fill="#e6edfd" stroke="#7797e8" stroke-width="0.9"/><rect x="1.9" y="3.1" width="4.9" height="5.3" fill="#bfcff7"/><rect x="1.7" y="1.9" width="3.6" height="1.1" fill="#ccd9f9"/><path d="M6.9 0.6 H7.6 Q8.2 0.6 8.2 1.2 V2.1 H6.9 Z" fill="#6a8ee6"/></g>
<g transform="translate(7.40 27.60)"><rect x="0.45" y="0.45" width="7.9" height="9.3" rx="0.9" fill="#e6edfd" stroke="#7797e8" stroke-width="0.9"/><rect x="1.9" y="3.1" width="4.9" height="5.3" fill="#bfcff7"/><rect x="1.7" y="1.9" width="3.6" height="1.1" fill="#ccd9f9"/><path d="M6.9 0.6 H7.6 Q8.2 0.6 8.2 1.2 V2.1 H6.9 Z" fill="#6a8ee6"/></g>
<g transform="translate(7.40 41.35)"><rect x="0.45" y="0.45" width="7.9" height="9.3" rx="0.9" fill="#e6edfd" stroke="#7797e8" stroke-width="0.9"/><rect x="1.9" y="3.1" width="4.9" height="5.3" fill="#bfcff7"/><rect x="1.7" y="1.9" width="3.6" height="1.1" fill="#ccd9f9"/><path d="M6.9 0.6 H7.6 Q8.2 0.6 8.2 1.2 V2.1 H6.9 Z" fill="#6a8ee6"/></g>
<g transform="translate(7.40 55.10)"><rect x="0.45" y="0.45" width="7.9" height="9.3" rx="0.9" fill="#e6edfd" stroke="#7797e8" stroke-width="0.9"/><rect x="1.9" y="3.1" width="4.9" height="5.3" fill="#bfcff7"/><rect x="1.7" y="1.9" width="3.6" height="1.1" fill="#ccd9f9"/><path d="M6.9 0.6 H7.6 Q8.2 0.6 8.2 1.2 V2.1 H6.9 Z" fill="#6a8ee6"/></g>
<g transform="translate(7.40 68.85)"><rect x="0.45" y="0.45" width="7.9" height="9.3" rx="0.9" fill="#e6edfd" stroke="#7797e8" stroke-width="0.9"/><rect x="1.9" y="3.1" width="4.9" height="5.3" fill="#bfcff7"/><rect x="1.7" y="1.9" width="3.6" height="1.1" fill="#ccd9f9"/><path d="M6.9 0.6 H7.6 Q8.2 0.6 8.2 1.2 V2.1 H6.9 Z" fill="#6a8ee6"/></g>
<g transform="translate(7.40 82.60)"><rect x="0.45" y="0.45" width="7.9" height="9.3" rx="0.9" fill="#e6edfd" stroke="#7797e8" stroke-width="0.9"/><rect x="1.9" y="3.1" width="4.9" height="5.3" fill="#bfcff7"/><rect x="1.7" y="1.9" width="3.6" height="1.1" fill="#ccd9f9"/><path d="M6.9 0.6 H7.6 Q8.2 0.6 8.2 1.2 V2.1 H6.9 Z" fill="#6a8ee6"/></g>
<g transform="translate(7.40 96.35)"><rect x="0.45" y="0.45" width="7.9" height="9.3" rx="0.9" fill="#e6edfd" stroke="#7797e8" stroke-width="0.9"/><rect x="1.9" y="3.1" width="4.9" height="5.3" fill="#bfcff7"/><rect x="1.7" y="1.9" width="3.6" height="1.1" fill="#ccd9f9"/><path d="M6.9 0.6 H7.6 Q8.2 0.6 8.2 1.2 V2.1 H6.9 Z" fill="#6a8ee6"/></g>
<g transform="translate(7.40 110.10)"><rect x="0.45" y="0.45" width="7.9" height="9.3" rx="0.9" fill="#e6edfd" stroke="#7797e8" stroke-width="0.9"/><rect x="1.9" y="3.1" width="4.9" height="5.3" fill="#bfcff7"/><rect x="1.7" y="1.9" width="3.6" height="1.1" fill="#ccd9f9"/><path d="M6.9 0.6 H7.6 Q8.2 0.6 8.2 1.2 V2.1 H6.9 Z" fill="#6a8ee6"/></g>
<rect x="2" y="122.05" width="175.9" height="13.75" fill="#f5f5f5"/>
<g transform="translate(7.40 123.85)"><rect x="0.45" y="0.45" width="7.9" height="9.3" rx="0.9" fill="#e6edfd" stroke="#7797e8" stroke-width="0.9"/><rect x="1.9" y="3.1" width="4.9" height="5.3" fill="#bfcff7"/><rect x="1.7" y="1.9" width="3.6" height="1.1" fill="#ccd9f9"/><path d="M6.9 0.6 H7.6 Q8.2 0.6 8.2 1.2 V2.1 H6.9 Z" fill="#6a8ee6"/></g>
<g transform="translate(7.40 137.60)"><rect x="0.45" y="0.45" width="7.9" height="9.3" rx="0.9" fill="#e6edfd" stroke="#7797e8" stroke-width="0.9"/><rect x="1.9" y="3.1" width="4.9" height="5.3" fill="#bfcff7"/><rect x="1.7" y="1.9" width="3.6" height="1.1" fill="#ccd9f9"/><path d="M6.9 0.6 H7.6 Q8.2 0.6 8.2 1.2 V2.1 H6.9 Z" fill="#6a8ee6"/></g>
<g transform="translate(7.40 151.35)"><rect x="0.45" y="0.45" width="7.9" height="9.3" rx="0.9" fill="#e6edfd" stroke="#7797e8" stroke-width="0.9"/><rect x="1.9" y="3.1" width="4.9" height="5.3" fill="#bfcff7"/><rect x="1.7" y="1.9" width="3.6" height="1.1" fill="#ccd9f9"/><path d="M6.9 0.6 H7.6 Q8.2 0.6 8.2 1.2 V2.1 H6.9 Z" fill="#6a8ee6"/></g>
<g transform="translate(7.40 165.10)"><rect x="0.45" y="0.45" width="7.9" height="9.3" rx="0.9" fill="#e6edfd" stroke="#7797e8" stroke-width="0.9"/><rect x="1.9" y="3.1" width="4.9" height="5.3" fill="#bfcff7"/><rect x="1.7" y="1.9" width="3.6" height="1.1" fill="#ccd9f9"/><path d="M6.9 0.6 H7.6 Q8.2 0.6 8.2 1.2 V2.1 H6.9 Z" fill="#6a8ee6"/></g>
<g transform="translate(7.40 178.85)"><rect x="0.45" y="0.45" width="7.9" height="9.3" rx="0.9" fill="#e6edfd" stroke="#7797e8" stroke-width="0.9"/><rect x="1.9" y="3.1" width="4.9" height="5.3" fill="#bfcff7"/><rect x="1.7" y="1.9" width="3.6" height="1.1" fill="#ccd9f9"/><path d="M6.9 0.6 H7.6 Q8.2 0.6 8.2 1.2 V2.1 H6.9 Z" fill="#6a8ee6"/></g>
</svg>
<div class="t" style="left:27.399999999999977px;top:15px;font-size:7.7px;line-height:9px;">Award Profile</div>
<div class="t" style="left:27.399999999999977px;top:28px;font-size:7.7px;line-height:9px;">Commitment Control Errors</div>
<div class="t" style="left:27.399999999999977px;top:42px;font-size:7.7px;line-height:9px;">Create Continuation</div>
<div class="t" style="left:27.399999999999977px;top:56px;font-size:7.7px;line-height:9px;">FA Error Interactive Report</div>
<div class="t" style="left:27.399999999999977px;top:70px;font-size:7.7px;line-height:9px;">Milestone Notification</div>
<div class="t" style="left:27.399999999999977px;top:84px;font-size:7.7px;line-height:9px;">Negotiate Award</div>
<div class="t" style="left:27.399999999999977px;top:97px;font-size:7.7px;line-height:9px;">Process Facilities Admin</div>
<div class="t" style="left:27.399999999999977px;top:111px;font-size:7.7px;line-height:9px;">Process Milestone Notification</div>
<div class="t" style="left:27.399999999999977px;top:125px;font-size:7.7px;line-height:9px;color:#b4632c;">Project</div>
<div class="t" style="left:27.399999999999977px;top:138px;font-size:7.7px;line-height:9px;">Project Activity</div>
<div class="t" style="left:27.399999999999977px;top:152px;font-size:7.7px;line-height:9px;">Project Budget Inquiry</div>
<div class="t" style="left:27.399999999999977px;top:166px;font-size:7.7px;line-height:9px;">Project Budgets</div>
<div class="t" style="left:27.399999999999977px;top:180px;font-size:7.7px;line-height:9px;">Review Award Modifications</div>
</div>
</body></html>
